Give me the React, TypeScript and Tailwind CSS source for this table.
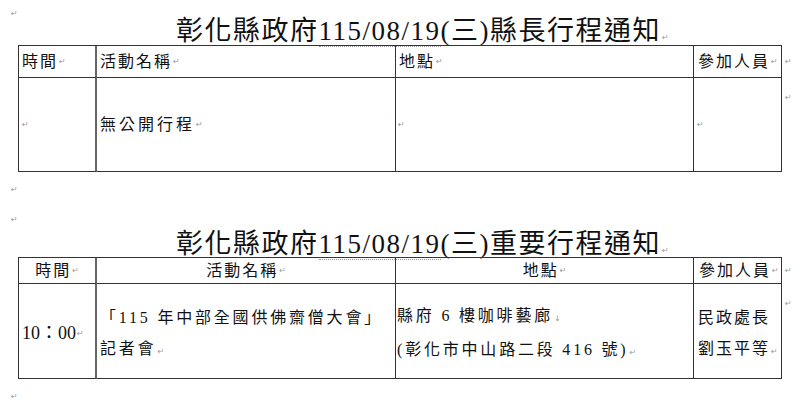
import React from "react";

const Mk = ({ c = "↵" }: { c?: string }) => (
  <span className="ml-[1px] font-['DejaVu_Sans'] text-[8px] tracking-normal text-[#999]">{c}</span>
);

const Title = ({ tail, cls }: { tail: string; cls: string }) => (
  <div className={`whitespace-nowrap pl-[176px] text-[27px] tracking-[1.5px] ${cls}`}>
    彰化縣政府
    <span className="border-b border-dotted border-[#999]">115/08/19</span>
    (三){tail}
    <Mk />
  </div>
);

const cols = "grid grid-cols-[78px_299px_298px_88px] border-l border-[#333]";
const cell = "border-b border-r border-[#333]";
const first = "border-b border-r-2 border-[#333] border-r-[#666]";

export default function App() {
  return (
    <div className="h-[408px] w-[800px] overflow-hidden bg-white pt-[4px] font-['Liberation_Serif','Noto_Sans_CJK_TC',serif] text-[#111]">
      <div className="h-[14px] pl-[10px] leading-[14px]">
        <Mk />
      </div>
      <Title tail="縣長行程通知" cls="h-[27px] leading-[27px]" />

      {/* table 1 */}
      <div className="ml-[18px] flex">
        <div className={`${cols} border-t text-[16px] tracking-[2px]`}>
          <div className={`${first} flex h-[32px] items-center pl-[3px]`}>
            時間<Mk />
          </div>
          <div className={`${cell} flex items-center pl-[3px]`}>
            活動名稱<Mk />
          </div>
          <div className={`${cell} flex items-center pl-[3px]`}>
            地點<Mk />
          </div>
          <div className={`${cell} flex items-center pl-[4px]`}>
            參加人員<Mk />
          </div>
        </div>
        <div className="flex items-center pl-[2px]">
          <Mk />
        </div>
      </div>
      <div className="ml-[18px] flex">
        <div className={`${cols} text-[16px] tracking-[3px]`}>
          <div className={`${first} flex h-[94px] items-center pl-[2px]`}>
            <Mk />
          </div>
          <div className={`${cell} flex items-center pl-[3px]`}>
            無公開行程<Mk />
          </div>
          <div className={`${cell} flex items-center pl-[1px]`}>
            <Mk />
          </div>
          <div className={`${cell} flex items-center pl-[2px]`}>
            <Mk />
          </div>
        </div>
        <div className="pl-[2px] pt-[10px] leading-[14px]">
          <Mk />
        </div>
      </div>

      <div className="h-[30px] pl-[10px] leading-[30px]">
        <Mk />
      </div>
      <div className="h-[30px] pl-[10px] leading-[30px]">
        <Mk />
      </div>
      <Title tail="重要行程通知" cls="h-[25px] leading-[25px]" />

      {/* table 2 */}
      <div className="ml-[18px] flex">
        <div className={`${cols} border-t text-[16px] tracking-[2px]`}>
          <div className={`${first} flex h-[26px] items-center justify-center`}>
            時間<Mk />
          </div>
          <div className={`${cell} flex items-center justify-center`}>
            活動名稱<Mk />
          </div>
          <div className={`${cell} flex items-center justify-center`}>
            地點<Mk />
          </div>
          <div className={`${cell} flex items-center pl-[5px]`}>
            參加人員<Mk />
          </div>
        </div>
        <div className="flex items-center pl-[2px]">
          <Mk />
        </div>
      </div>
      <div className="ml-[18px] flex">
        <div className={`${cols} text-[16px] leading-[31px] tracking-[2.8px]`}>
          <div className={`${first} flex h-[95px] items-center pl-[3px] pt-[4px] text-[18px] tracking-normal`}>
            10：00<Mk />
          </div>
          <div className={`${cell} flex flex-col justify-center pl-[3px] pt-[6px]`}>
            <div>「115 年中部全國供佛齋僧大會」</div>
            <div>
              記者會<Mk />
            </div>
          </div>
          <div className={`${cell} flex flex-col justify-center pl-[1px] pt-[6px]`}>
            <div>
              縣府 6 樓咖啡藝廊<Mk c="↓" />
            </div>
            <div>
              (彰化市中山路二段 416 號)<Mk />
            </div>
          </div>
          <div className={`${cell} flex flex-col justify-center pl-[4px] pt-[6px] tracking-[2px]`}>
            <div>民政處長</div>
            <div>
              劉玉平等<Mk />
            </div>
          </div>
        </div>
        <div className="pl-[2px] pt-[10px] leading-[14px]">
          <Mk />
        </div>
      </div>
      <div className="h-[30px] pl-[10px] leading-[30px]">
        <Mk />
      </div>
    </div>
  );
}
